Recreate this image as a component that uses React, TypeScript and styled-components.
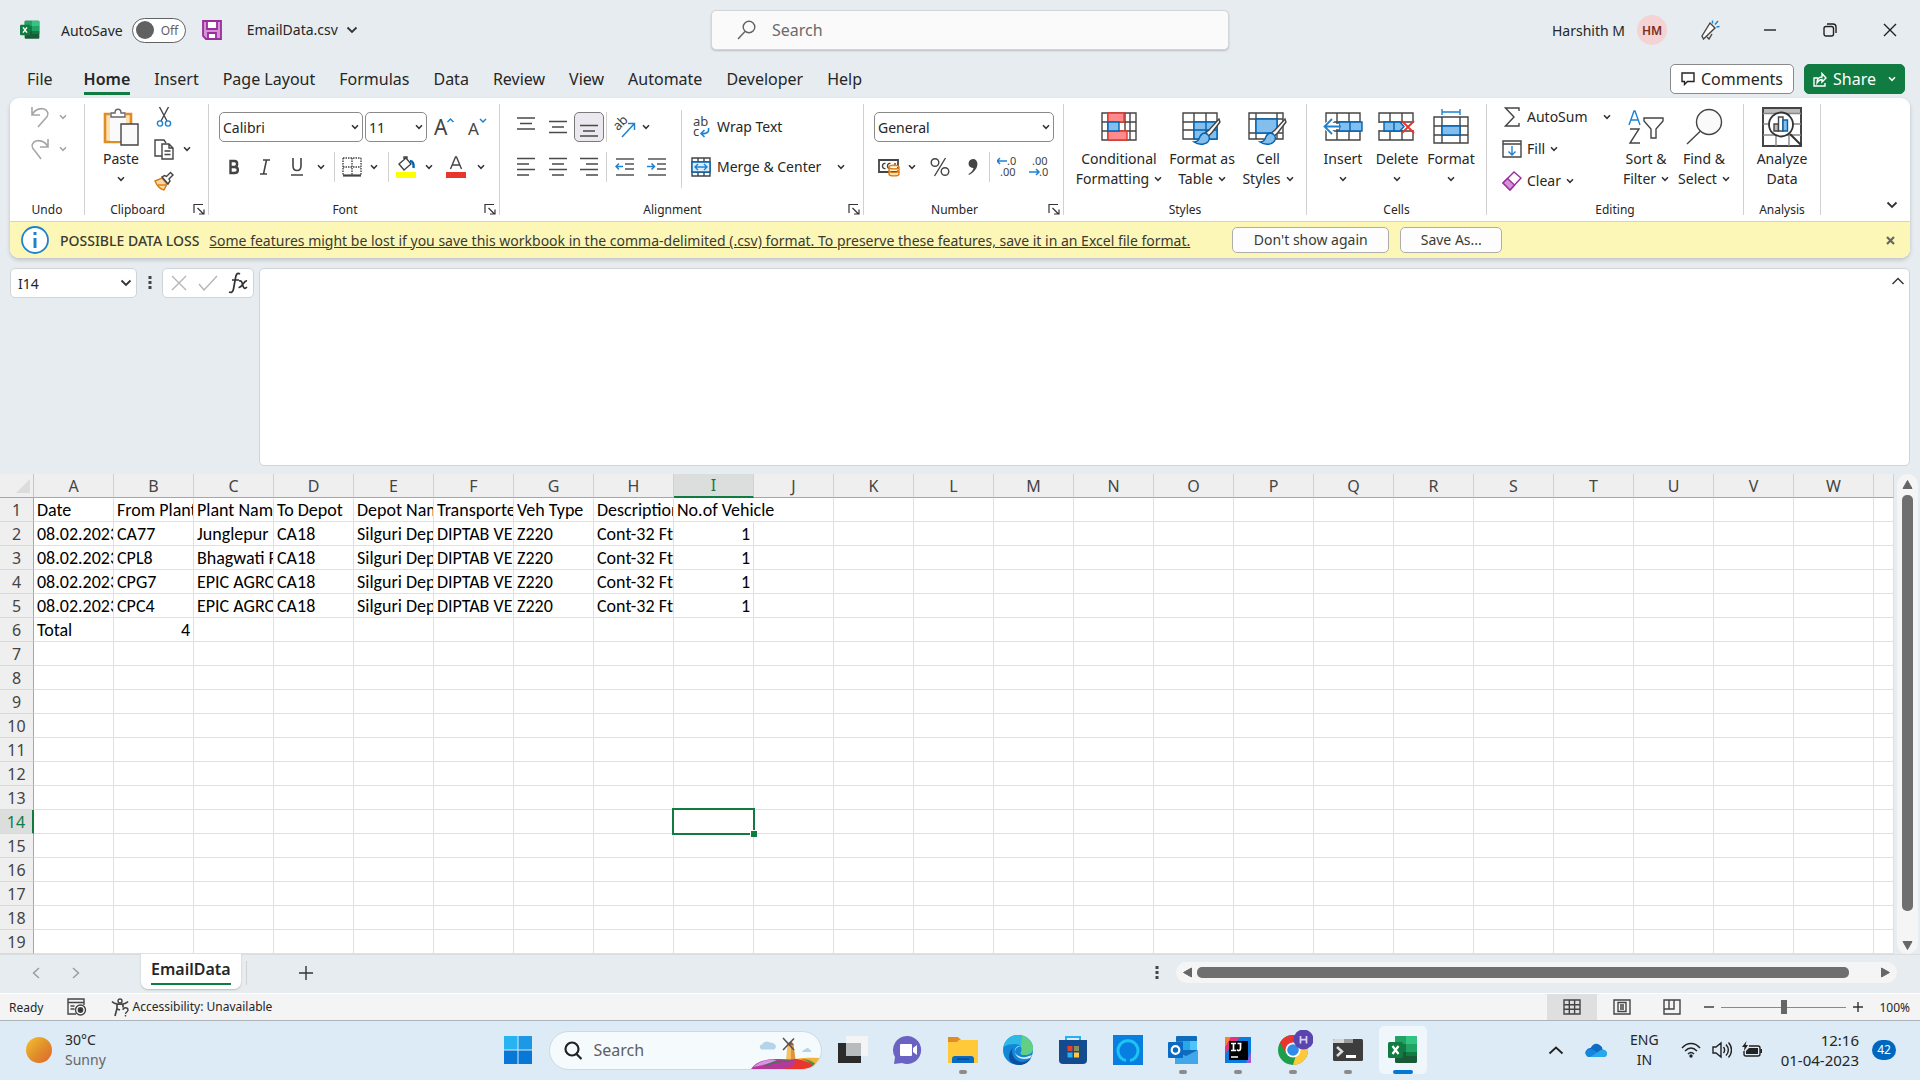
import React from "react";
import styled, { createGlobalStyle, css } from "styled-components";

const ui = `"Noto Sans", "Open Sans", sans-serif`;
const cellFont = `Carlito, Lato, sans-serif`;
const green = "#107c41";
const ink = "#262626";
const line = "#d1d1d1";
const blue = "#1e82d2";

const GlobalStyle = createGlobalStyle`
  *, *::before, *::after { box-sizing: border-box; }
  body { margin: 0; background: #e7ecf0; font-family: ${ui}; font-size: 14px; color: ${ink}; }
  button, input, select, textarea { font: inherit; color: inherit; }
  svg { display: block; flex: none; }
`;

const Page = styled.div`
  display: flex;
  flex-direction: column;
  height: 100vh;
  overflow: hidden;
  white-space: nowrap;
`;

const plainButton = css`
  display: flex;
  align-items: center;
  justify-content: center;
  border: 0;
  padding: 0;
  background: none;
  line-height: 20px;
`;

/* ---------- title bar ---------- */

const TitleBar = styled.header`
  display: flex;
  align-items: center;
  height: 60px;
  padding-left: 20px;
`;
const TitleSide = styled.div<{ $end?: boolean }>`
  flex: 1;
  display: flex;
  align-items: center;
  justify-content: ${(p) => (p.$end ? "flex-end" : "flex-start")};
`;
const AutoSave = styled.label`
  display: flex;
  align-items: center;
  gap: 9px;
  margin: 0 16px 0 21px;
`;
const Toggle = styled.span`
  display: flex;
  align-items: center;
  gap: 7px;
  width: 54px;
  height: 25px;
  padding-left: 3px;
  border: 1px solid #616161;
  border-radius: 13px;
  background: #fff;
  color: #616161;
  font-size: 12px;
  input {
    appearance: none;
    width: 18px;
    height: 18px;
    margin: 0;
    border-radius: 50%;
    background: #616161;
  }
`;
const IconButton = styled.button<{ $w?: number; $pressed?: boolean }>`
  ${plainButton}
  width: ${(p) => p.$w ?? 24}px;
  height: 30px;
  flex: none;
  font-size: 18px;
  ${(p) =>
    p.$pressed &&
    css`
      border: 1px solid #7a7a7a;
      border-radius: 5px;
      background: #ebe9ef;
    `}
`;
const FileName = styled.button`
  ${plainButton}
  gap: 8px;
  margin-left: 25px;
`;
const SearchBox = styled.label`
  display: flex;
  align-items: center;
  gap: 16px;
  width: 518px;
  height: 40px;
  padding-left: 25px;
  margin-bottom: 1px;
  border: 1px solid #d3d6d9;
  border-radius: 5px;
  background: #fafafa;
  box-shadow: 0 1px 2px rgba(0, 0, 0, 0.2);
  color: #616161;
  input {
    flex: 1;
    min-width: 0;
    border: 0;
    padding: 0;
    outline: 0;
    background: none;
    font-size: 16px;
  }
  input::placeholder { color: #6b6b6b; opacity: 1; }
`;
const Avatar = styled.span`
  display: flex;
  align-items: center;
  justify-content: center;
  width: 30px;
  height: 30px;
  margin: 0 13px 0 12px;
  border-radius: 50%;
  background: #f4d3d5;
  color: #7a2e1d;
  font-size: 12px;
  font-weight: 600;
`;

/* ---------- tabs ---------- */

const TabBar = styled.nav`
  display: flex;
  align-items: center;
  gap: 24px;
  height: 38px;
  padding: 0 15px 0 27px;
`;
const Tab = styled.button<{ $active?: boolean }>`
  ${plainButton}
  height: 32px;
  padding-top: 3px;
  border-bottom: 3px solid ${(p) => (p.$active ? green : "transparent")};
  font-size: 16px;
  font-weight: ${(p) => (p.$active ? 600 : 400)};
  &:first-child { margin-right: 7px; }
`;
const TabSpacer = styled.div`
  flex: 1;
`;
const TopActions = styled.div`
  display: flex;
  gap: 10px;
`;
const ActionButton = styled.button<{ $primary?: boolean }>`
  ${plainButton}
  gap: 6px;
  height: 30px;
  padding: 0 ${(p) => (p.$primary ? 8 : 10)}px;
  border: 1px solid ${(p) => (p.$primary ? green : "#8a8a8a")};
  border-radius: 5px;
  background: ${(p) => (p.$primary ? green : "#fff")};
  color: ${(p) => (p.$primary ? "#fff" : ink)};
  font-size: 16px;
  svg:last-child:not(:first-child) { margin-left: 6px; }
`;

/* ---------- ribbon ---------- */

const RibbonCard = styled.section`
  margin: 0 10px 10px;
  border-radius: 9px;
  background: #fff;
  box-shadow: 0 2px 4px rgba(0, 0, 0, 0.18);
`;
const Ribbon = styled.div`
  display: flex;
  height: 123px;
  padding: 6px 0;
`;
const Group = styled.div<{ $w: number }>`
  display: flex;
  flex-direction: column;
  flex: none;
  width: ${(p) => p.$w}px;
  border-right: 1px solid ${line};
`;
const GroupBody = styled.div<{ $pad?: number; $center?: boolean }>`
  display: flex;
  flex: 1;
  justify-content: ${(p) => (p.$center ? "center" : "flex-start")};
  padding-left: ${(p) => p.$pad ?? 0}px;
`;
const GroupFoot = styled.div`
  display: flex;
  align-items: center;
  height: 12px;
  font-size: 12px;
  line-height: 14px;
  span { flex: 1; padding-top: 2px; text-align: center; }
  button { height: 12px; }
`;
const Rows = styled.div`
  display: flex;
  flex-direction: column;
  padding-top: 3px;
`;
const Row = styled.div<{ $tall?: boolean }>`
  display: flex;
  align-items: center;
  height: ${(p) => (p.$tall ? 84 : 40)}px;
`;
const SmallRows = styled.div<{ $w?: number; $gap?: number }>`
  display: flex;
  flex-direction: column;
  gap: 6px;
  width: ${(p) => (p.$w ? p.$w + "px" : "auto")};
  margin-left: ${(p) => p.$gap ?? 0}px;
`;
const SmallRow = styled.div`
  display: flex;
  align-items: center;
  height: 26px;
`;
const TextButton = styled.button`
  ${plainButton}
  gap: 5px;
`;
const IconSlot = styled.span<{ $w: number }>`
  display: flex;
  justify-content: center;
  width: ${(p) => p.$w}px;
`;
const Divider = styled.span<{ $w: number; $h?: number }>`
  display: flex;
  justify-content: center;
  flex: none;
  width: ${(p) => p.$w}px;
  &::before {
    content: "";
    width: 1px;
    height: ${(p) => p.$h ?? 30}px;
    background: ${line};
  }
`;
const BigButton = styled.button<{ $w: number }>`
  ${plainButton}
  flex-direction: column;
  justify-content: flex-start;
  flex: none;
  width: ${(p) => p.$w}px;
  padding-top: 4px;
`;
const BigIcon = styled.span`
  display: flex;
  align-items: center;
  height: 38px;
  margin-bottom: 3px;
`;
const BigLine = styled.span`
  display: flex;
  align-items: center;
  gap: 5px;
  height: 20px;
`;
const SelectWrap = styled.span<{ $w: number }>`
  position: relative;
  width: ${(p) => p.$w}px;
  select {
    appearance: none;
    width: 100%;
    height: 30px;
    padding: 0 3px;
    border: 1px solid #8a8a8a;
    border-radius: 5px;
    background: #fff;
  }
  svg {
    position: absolute;
    right: 4px;
    top: 12px;
    pointer-events: none;
  }
`;
const CollapseCell = styled.div`
  flex: 1;
  display: flex;
  align-items: flex-end;
  justify-content: flex-end;
  padding-right: 6px;
  button { height: 20px; }
`;

/* ---------- message bar ---------- */

const MessageBar = styled.div`
  display: flex;
  align-items: center;
  height: 37px;
  padding: 0 8px 0 11px;
  border-top: 1px solid #d8d6ba;
  border-radius: 0 0 9px 9px;
  background: #fcf7b6;
  color: #3b3a32;
  a { color: inherit; margin-left: 10px; }
  strong { font-weight: 500; margin-left: 11px; }
`;
const MessageButton = styled.button<{ $w: number; $gap: number }>`
  ${plainButton}
  width: ${(p) => p.$w}px;
  height: 26px;
  margin-left: ${(p) => p.$gap}px;
  border: 1px solid #adadad;
  border-radius: 5px;
  background: #fdfdfd;
`;
const Push = styled.span`
  margin-left: auto;
`;

/* ---------- formula bar ---------- */

const FormulaBar = styled.div`
  display: flex;
  align-items: flex-start;
  padding: 0 10px 8px;
`;
const FieldBox = styled.div<{ $w: number }>`
  display: flex;
  align-items: center;
  width: ${(p) => p.$w}px;
  height: 30px;
  padding: 0 4px 0 7px;
  border: 1px solid #d0d4d7;
  border-radius: 5px;
  background: #fff;
  input {
    flex: 1;
    min-width: 0;
    padding: 0;
    border: 0;
    outline: 0;
  }
`;
const FormulaInput = styled.div`
  display: flex;
  flex: 1;
  align-items: flex-start;
  height: 198px;
  margin-left: 5px;
  padding-right: 1px;
  border: 1px solid #d0d4d7;
  border-radius: 5px;
  background: #fff;
  textarea {
    flex: 1;
    height: 100%;
    padding: 4px;
    border: 0;
    outline: 0;
    resize: none;
    background: none;
  }
  button { height: 24px; }
`;

/* ---------- worksheet ---------- */

const SheetArea = styled.main`
  display: flex;
  flex: 1;
  min-height: 0;
`;
const SheetClip = styled.div`
  flex: 1;
  min-width: 0;
  overflow: hidden;
  background: #fff;
`;
const Sheet = styled.table`
  width: 100%;
  table-layout: fixed;
  border-collapse: separate;
  border-spacing: 0;
`;
const ColHead = styled.th<{ $on?: boolean }>`
  height: 24px;
  padding: 0;
  border-right: 1px solid ${line};
  border-bottom: ${(p) => (p.$on ? `2px solid ${green}` : "1px solid #a6a6a6")};
  background: ${(p) => (p.$on ? "#dcdddd" : "#efefef")};
  color: ${(p) => (p.$on ? green : "#444")};
  font-size: 16px;
  font-weight: 400;
  line-height: 20px;
`;
const Corner = styled.th`
  padding: 0;
  border-right: 1px solid #c6c6c6;
  border-bottom: 1px solid #a6a6a6;
  background: #efefef;
  svg { margin-left: auto; margin-right: 3px; }
`;
const RowHead = styled.th<{ $on?: boolean }>`
  height: 24px;
  padding: 0;
  border-right: ${(p) => (p.$on ? `2px solid ${green}` : "1px solid #a6a6a6")};
  border-bottom: 1px solid #dadada;
  background: ${(p) => (p.$on ? "#dcdddd" : "#efefef")};
  color: ${(p) => (p.$on ? green : "#444")};
  font-size: 16px;
  font-weight: 400;
  line-height: 20px;
`;
const Cell = styled.td<{ $right?: boolean; $spill?: boolean }>`
  position: relative;
  height: 24px;
  padding: 0 3px;
  overflow: ${(p) => (p.$spill ? "visible" : "hidden")};
  border-right: 1px solid ${(p) => (p.$spill ? "transparent" : "#e0e0e0")};
  border-bottom: 1px solid #e0e0e0;
  color: #000;
  font-family: ${cellFont};
  font-size: 18px;
  line-height: 20px;
  text-align: ${(p) => (p.$right ? "right" : "left")};
  z-index: ${(p) => (p.$spill ? 1 : "auto")};
`;
const SelectionFrame = styled.span`
  position: absolute;
  inset: -2px;
  border: 2px solid ${green};
  &::after {
    content: "";
    position: absolute;
    right: -4px;
    bottom: -4px;
    width: 7px;
    height: 7px;
    border: 1px solid #fff;
    border-right: 0;
    border-bottom: 0;
    background: ${green};
  }
`;
const SelectedCell = styled(Cell)`
  overflow: visible;
  z-index: 2;
`;
const VTrack = styled.div`
  display: flex;
  flex-direction: column;
  align-items: center;
  gap: 5px;
  width: 21px;
  margin: 0 2px 0 3px;
  padding: 5px 0 3px;
  border-radius: 11px;
  background: #f5f5f5;
`;
const VThumb = styled.div`
  flex: 0 1 416px;
  width: 11px;
  border-radius: 5px;
  background: #6f6f6f;
`;
const VGap = styled.div`
  flex: 1;
`;

/* ---------- sheet tabs ---------- */

const SheetBar = styled.div`
  display: flex;
  height: 39px;
  padding-right: 23px;
  border-top: 1px solid #d9dde0;
`;
const SheetNav = styled.div`
  display: flex;
  align-items: center;
  width: 141px;
  padding: 0 0 2px 16px;
`;
const SheetTab = styled.button`
  ${plainButton}
  height: 35px;
  margin-top: -1px;
  padding: 0 10px 2px;
  border-radius: 0 0 7px 7px;
  background: #fff;
  box-shadow: 0 1px 2px rgba(0, 0, 0, 0.2);
  font-size: 16px;
  font-weight: 600;
  span {
    padding-bottom: 2px;
    border-bottom: 2px solid ${green};
    line-height: 24px;
  }
`;
const SheetAdd = styled.div`
  display: flex;
  align-items: center;
  flex: 1;
  gap: 44px;
  padding: 0 0 2px 2px;
`;
const HTrack = styled.div`
  display: flex;
  align-items: center;
  gap: 4px;
  width: 38%;
  height: 21px;
  margin: 7px 0 0 12px;
  padding: 0 6px;
  border-radius: 11px;
  background: #f5f5f5;
`;
const HThumb = styled.div`
  width: 92%;
  height: 11px;
  border-radius: 5px;
  background: #6f6f6f;
`;

/* ---------- status bar ---------- */

const StatusBar = styled.footer`
  display: flex;
  align-items: center;
  height: 28px;
  padding: 0 10px 0 9px;
  border-top: 1px solid #fff;
  border-bottom: 1px solid #aeb4b9;
  background: #f4f4f4;
  font-size: 12px;
`;
const StatusItem = styled.button`
  ${plainButton}
  gap: 2px;
  margin-left: 24px;
`;
const ViewButton = styled.button<{ $on?: boolean }>`
  ${plainButton}
  width: 50px;
  height: 26px;
  background: ${(p) => (p.$on ? "#dfdfdf" : "none")};
`;
const Zoom = styled.input`
  appearance: none;
  width: 125px;
  height: 14px;
  margin: 0;
  background: linear-gradient(#8a8a8a, #8a8a8a) center / 100% 1px no-repeat;
  &::-webkit-slider-thumb {
    appearance: none;
    width: 6px;
    height: 14px;
    background: #666;
  }
`;
const Percent = styled.output`
  width: 40px;
  text-align: right;
`;

/* ---------- taskbar ---------- */

const Taskbar = styled.div`
  display: grid;
  grid-template-columns: 1fr auto 1fr;
  align-items: center;
  height: 59px;
  padding: 0 24px 1px;
  background: #dcebf6;
`;
const Weather = styled.div`
  display: flex;
  align-items: center;
  gap: 12px;
  padding-left: 1px;
  line-height: 20px;
  small { display: block; font-size: 14px; color: #666; }
`;
const Apps = styled.div`
  display: flex;
  align-items: center;
  gap: 7px;
`;
const AppButton = styled.button<{ $state?: "open" | "active" }>`
  ${plainButton}
  flex-direction: column;
  position: relative;
  width: 48px;
  height: 48px;
  border-radius: 5px;
  background: ${(p) => (p.$state === "active" ? "#eff6fc" : "none")};
  &::after {
    content: "";
    position: absolute;
    bottom: 0;
    width: ${(p) => (p.$state === "active" ? 20 : p.$state ? 8 : 0)}px;
    height: 4px;
    border-radius: 2px;
    background: ${(p) => (p.$state === "active" ? "#0078d4" : "#8b8b8b")};
  }
`;
const TaskSearch = styled.label`
  display: flex;
  align-items: center;
  gap: 12px;
  width: 273px;
  height: 39px;
  padding-left: 14px;
  overflow: hidden;
  border: 1px solid #c9dae6;
  border-radius: 20px;
  background: #f5fafd;
  input {
    flex: 1;
    min-width: 0;
    padding: 0;
    border: 0;
    outline: 0;
    background: none;
    font-size: 16px;
  }
  input::placeholder { color: #606060; opacity: 1; }
`;
const Tray = styled.div`
  display: flex;
  align-items: center;
  justify-content: flex-end;
  gap: 9px;
  line-height: 20px;
`;
const TrayText = styled.div<{ $right?: boolean }>`
  margin: ${(p) => (p.$right ? "0 4px 0 10px" : "0 12px 0 6px")};
  text-align: ${(p) => (p.$right ? "right" : "center")};
  font-size: ${(p) => (p.$right ? 15 : 14)}px;
`;
const Badge = styled.span`
  width: 24px;
  height: 20px;
  border-radius: 10px;
  background: #0067c0;
  color: #fff;
  font-size: 12px;
  text-align: center;
`;

/* ---------- drawings ---------- */

type DrawProps = { w: number; h: number; s?: string; sw?: number; children: React.ReactNode };
const Draw = ({ w, h, s = "#444", sw = 1.4, children }: DrawProps) => (
  <svg width={w} height={h} viewBox={`0 0 ${w} ${h}`} fill="none" stroke={s} strokeWidth={sw} aria-hidden="true">
    {children}
  </svg>
);
const Chev = ({ c = "#333", big, up }: { c?: string; big?: boolean; up?: boolean }) => (
  <Draw w={big ? 12 : 8} h={big ? 8 : 6} s={c} sw={up ? 1.4 : big ? 1.8 : 1.5}>
    <path d={up ? "M.500 7 6 1.500 11.500 7" : big ? "M1.5 1.5 6 6l4.500-4.500" : "M1 1.200 4 4.300 7 1.200"} />
  </Draw>
);
const ChevButton = ({ w = 18, c }: { w?: number; c?: string }) => (
  <IconButton $w={w} aria-label="More options"><Chev c={c} /></IconButton>
);
const Launcher = () => (
  <IconButton $w={18} aria-label="Group settings">
    <Draw w={12} h={12} s="#333" sw={1.2}><path d="M1 10V1.500h9M4.500 5l6 6M11 6.500V11H6" /></Draw>
  </IconButton>
);
const ExcelIcon = ({ size }: { size: number }) => (
  <svg width={size} height={size} viewBox="0 0 30 30" aria-hidden="true">
    <rect x="7" y="1" width="22" height="27" rx="1.500" fill="#185c37" />
    <path d="M7 2.500A1.500 1.500 0 0 1 8.500 1H18v8H7z" fill="#21a366" />
    <path d="M18 1h9.500A1.500 1.500 0 0 1 29 2.500V9H18z" fill="#33c481" />
    <rect x="7" y="9" width="11" height="8" fill="#107c41" />
    <rect x="18" y="9" width="11" height="8" fill="#21a366" />
    <rect x="18" y="17" width="11" height="4" fill="#107c41" />
    <rect x="0" y="7" width="15" height="16" rx="1.500" fill="#107c41" />
    <path d="m4.500 11 6 8M10.500 11l-6 8" stroke="#fff" strokeWidth="2.200" />
  </svg>
);
const Lines = ({ y, x }: { y: number[]; x: number[][] }) => (
  <Draw w={20} h={22} s="#4a4a4a" sw={1.5}>
    <path d={y.map((v, i) => `M${x[i][0]} ${v}H${x[i][1]}`).join("")} />
  </Draw>
);
const vAlign = [[1, 19], [4, 16], [1, 19]];
const Indent = ({ flip }: { flip?: boolean }) => (
  <Draw w={20} h={20} s="#555" sw={1.5}>
    <path d="M1 2h18M10 7h9M10 12h9M1 18h18" />
    <path stroke={blue} d={flip ? "M0 9.500h7M4.500 6.500l3 3-3 3" : "M1 9.500h7M4 6.500l-3 3 3 3"} />
  </Draw>
);
const Brush = () => (
  <>
    <path d="M37 11 27 22l-3.500 3 3 3 3.500-3.500L38 14z" fill="#fafafa" />
    <path d="M23 25c-4 0-5 3-6 6-1 2-3 3-5 3 5 3.500 13 3 15-2 1-3-.500-6-4-7z" fill="#83beec" stroke="#0063b1" />
  </>
);
const CondIcon = () => (
  <Draw w={36} h={30}>
    <path d="M1 1h34v27H1zM7 1v27M29 1v27M1 10h34M1 19h34M24 1v27" fill="#fff" />
    <path d="M7 1h16v9H7zM7 19h19v9H7z" fill="#ff8a8c" stroke="#e8352d" />
    <path d="M7 10h11v9H7z" fill="#83beec" stroke="#0063b1" />
  </Draw>
);
const TableIcon = ({ cell }: { cell?: boolean }) => (
  <Draw w={40} h={38}>
    <path d={cell ? "M1 5h34v26H1zM1 11h34M8 5v26M1 25h34M29 5v26" : "M1 5h34v26H1zM1 14h34M1 22h34M12 5v26M24 5v26"} fill="#fff" />
    <path d={cell ? "M8 11h21v14H8z" : "M12 14h23v17H12zM12 22h23M24 14v17"} fill="#83beec" stroke="#0063b1" />
    <Brush />
  </Draw>
);
const InsertIcon = () => (
  <Draw w={40} h={36}>
    <path d="M3 4h34v27H3zM14 4v27M26 4v27M3 13h34M3 22h34" fill="#fff" />
    <path d="M16 13h23v9H16zM27 13v9" fill="#83beec" stroke="#0063b1" />
    <path d="M16 17.500H2M10 10l-8 7.500 8 7.500" stroke="#fff" strokeWidth={5} />
    <path d="M18 17.500H1.500M9 10l-7.500 7.500L9 25" stroke={blue} strokeWidth={1.800} />
  </Draw>
);
const DeleteIcon = () => (
  <Draw w={38} h={36}>
    <path d="M1 4h34v27H1zM12 4v27M24 4v27M1 13h34M1 22h34" fill="#fff" />
    <path d="M0 14h36v7H0z" fill="#fff" stroke="none" />
    <path d="M6 13h16l4 4.500-4 4.500H6zM16 13v9" fill="#83beec" stroke="#0063b1" />
    <path d="m24 12 12 12M36 12 24 24" stroke="#e8352d" strokeWidth={1.900} />
  </Draw>
);
const FormatIcon = () => (
  <Draw w={36} h={38}>
    <path d="M1 9h34v26H1zM9 9v26M27 9v26M1 18h34M1 27h34" fill="#fff" />
    <path d="M9 18h18v9H9z" fill="#83beec" stroke="#0063b1" />
    <path d="M9 4h18M9 1v6M27 1v6" stroke={blue} />
  </Draw>
);
const MergeIcon = () => (
  <Draw w={20} h={20}>
    <path d="M1 1h18v18H1zM1 5h18M1 15h18M7 1v4M13 1v4M7 15v4M13 15v4" fill="#fff" />
    <path d="M1 5h18v10H1z" fill="#dcecf9" stroke="#0063b1" />
    <path d="M4 10h12M7 7l-3 3 3 3M13 7l3 3-3 3" stroke={blue} />
  </Draw>
);
const DecimalIcon = ({ less }: { less?: boolean }) => (
  <svg width="20" height="22" viewBox="0 0 20 22" aria-hidden="true" fontFamily="Noto Sans, sans-serif" fontSize="11" fill="#444">
    <text x={less ? 3 : 10} y="9">{less ? ".00" : ".0"}</text>
    <text x={less ? 10 : 3} y="20">{less ? ".0" : ".00"}</text>
    <path d={less ? "M0 16h10M7 13l3 3-3 3" : "M10 5H0M3 2 0 5l3 3"} fill="none" stroke={blue} strokeWidth="1.500" />
  </svg>
);
const FontSizeIcon = ({ shrink }: { shrink?: boolean }) => (
  <svg width="20" height="24" viewBox="0 0 20 24" aria-hidden="true" fontFamily="Noto Sans, sans-serif" fill="#444">
    <text x="0" y="20" fontSize={shrink ? 17 : 21}>A</text>
    <path d={shrink ? "m12 4 3 3 3-3" : "m13.500 7 3-3 3 3"} fill="none" stroke={blue} strokeWidth="1.500" />
  </svg>
);
const MagnifierIcon = ({ s = "#616161" }: { s?: string }) => (
  <Draw w={19} h={20} s={s} sw={1.4}><circle cx="12" cy="7" r="5.800" /><path d="M8 11.500 1 19" /></Draw>
);
const Tri = ({ d }: { d: string }) => (
  <svg width="11" height="11" viewBox="0 0 11 11" aria-hidden="true"><path d={d} fill="#666" stroke="#666" strokeLinejoin="round" /></svg>
);
const Dots = () => (
  <svg width="4" height="14" viewBox="0 0 4 14" aria-hidden="true"><path d="M.500 0h3v3h-3zM.500 5h3v3h-3zM.500 10h3v3h-3z" fill="#444" /></svg>
);

/* ---------- data ---------- */

const tabs = ["File", "Home", "Insert", "Page Layout", "Formulas", "Data", "Review", "View", "Automate", "Developer", "Help"];
const columns = "ABCDEFGHIJKLMNOPQRSTUVW".split("");
const shipment = (plant: string, name: string) => ["08.02.2023", plant, name, "CA18", "Silguri Dep", "DIPTAB VE", "Z220", "Cont-32 Ft", 1];
const data: (string | number)[][] = [
  ["Date", "From Plant", "Plant Name", "To Depot", "Depot Name", "Transporter", "Veh Type", "Description", "No.of Vehicle"],
  shipment("CA77", "Junglepur P"),
  shipment("CPL8", "Bhagwati P"),
  shipment("CPG7", "EPIC AGRO"),
  shipment("CPC4", "EPIC AGRO"),
  ["Total", 4],
];
const rowCount = 19;

const Big = ({ w, icon, lines, menu }: { w: number; icon: React.ReactNode; lines: string[]; menu?: boolean }) => (
  <BigButton $w={w}>
    <BigIcon>{icon}</BigIcon>
    {lines.map((t, i) => (
      <BigLine key={t}>{t}{menu && i === lines.length - 1 && <Chev />}</BigLine>
    ))}
  </BigButton>
);
const BigDrop = ({ w, icon, text }: { w: number; icon: React.ReactNode; text: string }) => (
  <BigButton $w={w}>
    <BigIcon>{icon}</BigIcon>
    <BigLine>{text}</BigLine>
    <BigLine><Chev /></BigLine>
  </BigButton>
);

const RibbonGroups = () => (
  <Ribbon>
    <Group $w={75}>
      <GroupBody $pad={18}>
        <SmallRows>
          <SmallRow>
            <IconButton aria-label="Undo"><Draw w={20} h={22} s="#a6a6a6" sw={1.600}><path d="M2 1v8h8M2 9C5 3 12 1 16 4c4 4 1 7-1 9l-7 8" /></Draw></IconButton>
            <ChevButton w={22} c="#a6a6a6" />
          </SmallRow>
          <SmallRow>
            <IconButton aria-label="Redo"><Draw w={20} h={22} s="#a6a6a6" sw={1.600}><path d="M18 1v8h-8M18 9C15 3 8 1 4 4c-4 4-1 7 1 9l6 8" /></Draw></IconButton>
            <ChevButton w={22} c="#a6a6a6" />
          </SmallRow>
        </SmallRows>
      </GroupBody>
      <GroupFoot><span>Undo</span></GroupFoot>
    </Group>

    <Group $w={124}>
      <GroupBody $pad={13}>
        <BigDrop
          w={46}
          text="Paste"
          icon={
            <Draw w={36} h={38}>
              <path d="M2 6h26v28H2z" fill="#fde2b0" stroke="#e08d28" strokeWidth={2.600} />
              <path d="M7 4h16v29H7z" fill="#fafafa" stroke="none" />
              <path d="M8 9V5h4c0-5 6-5 6 0h4v4z" fill="#fff" stroke="#666" />
              <path d="M18 16h17v21H18z" fill="#fafafa" />
            </Draw>
          }
        />
        <SmallRows $gap={8}>
          <SmallRow>
            <IconButton aria-label="Cut">
              <Draw w={16} h={22}><path d="M3.500 1 11 15M12.500 1 5 15" /><circle cx="4" cy="17.500" r="2.600" stroke={blue} /><circle cx="12" cy="17.500" r="2.600" stroke={blue} /></Draw>
            </IconButton>
          </SmallRow>
          <SmallRow>
            <IconButton aria-label="Copy">
              <Draw w={20} h={21}><path d="M8 17H1V1h9l2 3" fill="#fff" /><path d="M8 5h7l4 4v11H8zM15 5v4h4M10.500 12h6M10.500 15.500h6" fill="#fff" /></Draw>
            </IconButton>
            <ChevButton w={22} />
          </SmallRow>
          <SmallRow>
            <IconButton aria-label="Format painter">
              <Draw w={20} h={20}><path d="M1 10 8 7l5 6-3 6c-4-1-7-4-9-9z" fill="#fbd9a5" stroke="#d97a12" /><path d="M4 14h8" stroke="#d97a12" /><path d="m8 6 6 7 2-3-1-2 4-4-2.500-2.500-4 4-2-1z" fill="#fafafa" /></Draw>
            </IconButton>
          </SmallRow>
        </SmallRows>
      </GroupBody>
      <GroupFoot><span>Clipboard</span><Launcher /></GroupFoot>
    </Group>

    <Group $w={291}>
      <GroupBody $pad={10}>
        <Rows>
          <Row>
            <SelectWrap $w={144}><select aria-label="Font"><option>Calibri</option></select><Chev /></SelectWrap>
            <Divider $w={2} $h={0} />
            <SelectWrap $w={62}><select aria-label="Font size"><option>11</option></select><Chev /></SelectWrap>
            <IconButton $w={34} aria-label="Increase font size"><FontSizeIcon /></IconButton>
            <IconButton $w={34} aria-label="Decrease font size"><FontSizeIcon shrink /></IconButton>
          </Row>
          <Row>
            <IconButton $w={30} aria-label="Bold"><Draw w={12} h={16} sw={2.400}><path d="M2.500 2v12h4c4.500 0 4.500-6 0-6 3.500 0 3.500-6 0-6zM2.500 8h4" /></Draw></IconButton>
            <IconButton $w={32} aria-label="Italic"><Draw w={12} h={16} sw={1.600}><path d="M4 1h7M1 15h7M7.500 1l-3 14" /></Draw></IconButton>
            <IconButton $w={32} aria-label="Underline"><Draw w={12} h={18} sw={1.600}><path d="M2 0v8c0 6 8 6 8 0V0M0 17h12" /></Draw></IconButton>
            <ChevButton w={16} />
            <Divider $w={10} />
            <IconButton $w={26} aria-label="Borders">
              <Draw w={20} h={20}><path d="M1 1h18M1 1v17M19 1v17M10 1v17M1 10h18" strokeDasharray="1.500 1" /><path d="M1 18.500h18" strokeWidth={2.200} /></Draw>
            </IconButton>
            <ChevButton />
            <Divider $w={10} />
            <IconButton $w={26} aria-label="Fill color">
              <Draw w={20} h={22}><path d="m3 8 7-6 5 6-7 6zM8 5V1h3v3" fill="#fff" /><path d="M14 5c3 0 4 3 3.500 7" stroke="#0063b1" strokeWidth={2.400} /><path d="M0 16h20v6H0z" fill="#ff0" stroke="none" /></Draw>
            </IconButton>
            <ChevButton w={20} />
            <IconButton $w={34} aria-label="Font color">
              <Draw w={20} h={22}><path d="m4.500 13 5-12h1l5 12M6 9h8" /><path d="M0 16h20v6H0z" fill="#e8352d" stroke="none" /></Draw>
            </IconButton>
            <ChevButton w={16} />
          </Row>
        </Rows>
      </GroupBody>
      <GroupFoot><span>Font</span><Launcher /></GroupFoot>
    </Group>

    <Group $w={364}>
      <GroupBody $pad={10}>
        <Rows>
          <Row>
            <IconButton $w={32} aria-label="Top align"><Lines y={[2, 7.5, 13]} x={vAlign} /></IconButton>
            <IconButton $w={32} aria-label="Middle align"><Lines y={[5.5, 11, 16.5]} x={vAlign} /></IconButton>
            <IconButton $w={30} $pressed aria-label="Bottom align"><Lines y={[9.5, 15, 20]} x={vAlign} /></IconButton>
            <Divider $w={5} />
            <IconButton $w={32} aria-label="Orientation">
              <svg width="22" height="22" viewBox="0 0 22 22" aria-hidden="true">
                <text x="0" y="12" fontFamily="Noto Sans, sans-serif" fontSize="13" fill="#444" transform="rotate(-45 6 9)">ab</text>
                <path d="M8 21 20 8M14 7.500h6.500V14" fill="none" stroke={blue} strokeWidth="1.500" />
              </svg>
            </IconButton>
            <ChevButton w={10} />
          </Row>
          <Row>
            <IconButton $w={32} aria-label="Align left"><Lines y={[2.5, 8, 13.5, 19]} x={[[1, 19], [1, 13], [1, 19], [1, 13]]} /></IconButton>
            <IconButton $w={32} aria-label="Center"><Lines y={[2.5, 8, 13.5, 19]} x={[[1, 19], [4, 16], [1, 19], [4, 16]]} /></IconButton>
            <IconButton $w={30} aria-label="Align right"><Lines y={[2.5, 8, 13.5, 19]} x={[[1, 19], [7, 19], [1, 19], [7, 19]]} /></IconButton>
            <Divider $w={5} />
            <IconButton $w={32} aria-label="Decrease indent"><Indent /></IconButton>
            <IconButton $w={32} aria-label="Increase indent"><Indent flip /></IconButton>
          </Row>
        </Rows>
        <Rows><Row $tall><Divider $w={17} $h={78} /></Row></Rows>
        <Rows>
          <Row>
            <TextButton>
              <IconSlot $w={22}>
                <svg width="20" height="22" viewBox="0 0 20 22" aria-hidden="true" fontFamily="Noto Sans, sans-serif" fontSize="13" fill="#444">
                  <text x="2" y="10">ab</text>
                  <text x="2" y="20">c</text>
                  <path d="M17.500 12c1 5-3 6-7 5.500M13.500 14l-3.500 3.500 3.500 3.500" fill="none" stroke={blue} strokeWidth="1.600" />
                </svg>
              </IconSlot>
              Wrap Text
            </TextButton>
          </Row>
          <Row>
            <TextButton><IconSlot $w={22}><MergeIcon /></IconSlot>Merge &amp; Center</TextButton>
            <ChevButton w={40} />
          </Row>
        </Rows>
      </GroupBody>
      <GroupFoot><span>Alignment</span><Launcher /></GroupFoot>
    </Group>

    <Group $w={200}>
      <GroupBody $pad={10}>
        <Rows>
          <Row>
            <SelectWrap $w={180}><select aria-label="Number format"><option>General</option></select><Chev /></SelectWrap>
          </Row>
          <Row>
            <IconButton $w={30} aria-label="Accounting format">
              <Draw w={22} h={20}>
                <path d="M1 3h19v12H1z" fill="#fff" strokeWidth={1.800} />
                <path d="M7.500 6.500c-4-1-4 6 0 5M12.500 6.500c-4-1-4 6 0 5M17 6v3" />
                <path d="M11 10c0-2.500 10-2.500 10 0v7c0 2.500-10 2.500-10 0zM11 10c0 2.500 10 2.500 10 0M11 13.500c0 2.500 10 2.500 10 0" fill="#fde2b0" stroke="#d97a12" />
              </Draw>
            </IconButton>
            <ChevButton w={16} />
            <IconButton $w={40} aria-label="Percent style"><Draw w={20} h={20}><circle cx="5" cy="5.500" r="3.800" /><circle cx="15" cy="14.500" r="3.800" /><path d="M15.500 1 4.500 19" /></Draw></IconButton>
            <IconButton $w={26} aria-label="Comma style"><Draw w={12} h={18} s="none"><path d="M6 1c6 0 7 10-4 16l-.500-1C5 14 6 12 6.500 10 0 10.500 0 1 6 1z" fill="#444" /></Draw></IconButton>
            <Divider $w={6} />
            <IconButton $w={30} aria-label="Increase decimal"><DecimalIcon /></IconButton>
            <IconButton $w={34} aria-label="Decrease decimal"><DecimalIcon less /></IconButton>
          </Row>
        </Rows>
      </GroupBody>
      <GroupFoot><span>Number</span><Launcher /></GroupFoot>
    </Group>

    <Group $w={243}>
      <GroupBody $pad={12}>
        <Big w={86} icon={<CondIcon />} lines={["Conditional", "Formatting"]} menu />
        <Big w={80} icon={<TableIcon />} lines={["Format as", "Table"]} menu />
        <Big w={52} icon={<TableIcon cell />} lines={["Cell", "Styles"]} menu />
      </GroupBody>
      <GroupFoot><span>Styles</span></GroupFoot>
    </Group>

    <Group $w={180}>
      <GroupBody $pad={9}>
        <BigDrop w={54} icon={<InsertIcon />} text="Insert" />
        <BigDrop w={54} icon={<DeleteIcon />} text="Delete" />
        <BigDrop w={54} icon={<FormatIcon />} text="Format" />
      </GroupBody>
      <GroupFoot><span>Cells</span></GroupFoot>
    </Group>

    <Group $w={257}>
      <GroupBody $pad={15}>
        <SmallRows $w={112}>
          <SmallRow>
            <TextButton><IconSlot $w={20}><Draw w={16} h={20}><path d="M15 4V1H1.500L10 10l-8.500 9H15v-3" /></Draw></IconSlot>AutoSum</TextButton>
            <Push><ChevButton w={14} /></Push>
          </SmallRow>
          <SmallRow>
            <TextButton><IconSlot $w={20}><Draw w={20} h={18}><path d="M1 1h18v16H1zM1 4h18" fill="#fff" /><path d="M10 6v9M6.500 11.500 10 15l3.500-3.500" stroke={blue} /></Draw></IconSlot>Fill <Chev /></TextButton>
          </SmallRow>
          <SmallRow>
            <TextButton><IconSlot $w={20}><Draw w={20} h={20} s="#9b2d9b"><path d="m1 12 11-11 7 6L8 19z" fill="#fff" /><path d="m1 12 4.500-4.500L12.500 14 8 19z" fill="#d493d6" /></Draw></IconSlot>Clear <Chev /></TextButton>
          </SmallRow>
        </SmallRows>
        <Big
          w={64}
          lines={["Sort &", "Filter"]}
          menu
          icon={
            <Draw w={36} h={36}>
              <path d="m1 16 5-14h1l5 14M3 11h7" stroke={blue} />
              <path d="M2 20h9L2 34h10M16 9h19v3l-7 8v9h-5v-9l-7-8z" />
            </Draw>
          }
        />
        <Big w={52} lines={["Find &", "Select"]} menu icon={<Draw w={38} h={38}><circle cx="24" cy="14" r="12.500" fill="#fafafa" /><path d="M15.500 23 2 36" /></Draw>} />
      </GroupBody>
      <GroupFoot><span>Editing</span></GroupFoot>
    </Group>

    <Group $w={77}>
      <GroupBody $center>
        <Big
          w={70}
          lines={["Analyze", "Data"]}
          icon={
            <Draw w={40} h={40}>
              <path d="M1 1h38v38H1z" fill="#fff" strokeWidth={2} />
              <path d="M2 2h36v4H2z" fill="#bbb" stroke="none" />
              <path d="M1 6.500h38M1 17h38M1 28h38M14 6v33M27 6v33" stroke="#888" />
              <circle cx="19" cy="17.500" r="12" fill="#fff" stroke="#333" strokeWidth={1.800} />
              <path d="m28 27 11 11" stroke="#333" strokeWidth={2} />
              <path d="M12 17h4.500v7H12z" fill="#bbb" /><path d="M16.500 10H21v14h-4.500z" fill="#fff" /><path d="M21 13h4.500v11H21z" fill="#83beec" stroke="#0063b1" />
            </Draw>
          }
        />
      </GroupBody>
      <GroupFoot><span>Analysis</span></GroupFoot>
    </Group>

    <CollapseCell><IconButton aria-label="Collapse ribbon"><Chev big /></IconButton></CollapseCell>
  </Ribbon>
);

const Worksheet = () => (
  <Sheet>
    <colgroup>
      <col style={{ width: 34 }} />
      {columns.map((c) => <col key={c} style={{ width: 80 }} />)}
      <col />
    </colgroup>
    <thead>
      <tr>
        <Corner><Draw w={14} h={14} s="none"><path d="M14 0v14H0z" fill="#dcdcdc" /></Draw></Corner>
        {columns.map((c) => <ColHead key={c} $on={c === "I"} scope="col">{c}</ColHead>)}
        <ColHead as="td" />
      </tr>
    </thead>
    <tbody>
      {Array.from({ length: rowCount }, (_, r) => (
        <tr key={r}>
          <RowHead $on={r === 13} scope="row">{r + 1}</RowHead>
          {columns.map((c, i) => {
            if (r === 13 && c === "I") return <SelectedCell key={c}><SelectionFrame /></SelectedCell>;
            const v = data[r]?.[i];
            return <Cell key={c} $right={typeof v === "number"} $spill={r === 0 && c === "I"}>{v}</Cell>;
          })}
          <Cell />
        </tr>
      ))}
    </tbody>
  </Sheet>
);

const TaskIcon = ({ children }: { children: React.ReactNode }) => (
  <svg width="32" height="32" viewBox="0 0 32 32" aria-hidden="true">{children}</svg>
);

const apps: { name: string; state?: "open" | "active"; icon: React.ReactNode }[] = [
  { name: "Task view", icon: <TaskIcon><rect x="1" y="9" width="23" height="20" fill="#2b2b2b" /><rect x="9" y="2" width="22" height="20" fill="#f4f4f4" /><path d="M9 9h15v13H9z" fill="#b9bcbe" /></TaskIcon> },
  { name: "Chat", icon: <TaskIcon><path d="M16 2a14 14 0 1 1-6 27l-8 1 1-7A14 14 0 0 1 16 2z" fill="#6b63c4" /><rect x="8" y="10" width="12" height="12" rx="1" fill="#fff" /><path d="m21 14 4-3v10l-4-3z" fill="#fff" /></TaskIcon> },
  { name: "File Explorer", state: "open", icon: <TaskIcon><path d="M1 3h10l3 3h17v6H1z" fill="#e08d28" /><path d="M1 8h9l2-2h19v23H1z" fill="#ffc93a" /><path d="M5 29v-4q0-3 3-3h16q3 0 3 3v4z" fill="#0a6bc4" /><path d="M10 25h12" stroke="#064a90" strokeWidth="1.500" /></TaskIcon> },
  { name: "Edge", icon: <TaskIcon><circle cx="16" cy="16" r="15" fill="#1287d8" /><path d="M1.500 13C3 5 9 1 16 1c9 0 15 6 15 13 0 5-4 7-8 7-4 0-5-1-4-3 2-5-2-8-6-8-5 0-9 1-11.500 3z" fill="#2fb9e5" /><path d="M20 1.500C27 4 31 9 31 14c0 5-4 7-8 7-4 0-5-1-4-3 1-2 1-4 0-5z" fill="#63cf83" /><path d="M10 17c0 8 7 13 14 10 3-1 3-2 5-3-4 8-14 9-20 4-4-5-2-11 4-16-2 2-3 3-3 5z" fill="#0c4f9e" /><path d="M19 13c-3-2-7 1-6 5s6 6 11 5l6-2-2 3c-8 3-15-1-15-6 0-4 3-6 6-5z" fill="#dcebf6" /></TaskIcon> },
  { name: "Store", icon: <TaskIcon><path d="M9 7V3h14v4" fill="none" stroke="#26b2ef" strokeWidth="2" /><path d="M2 6h28v20q0 4-4 4H6q-4 0-4-4z" fill="#134b8e" /><path d="M10.500 12h5v5h-5z" fill="#e8402c" /><path d="M17 12h5v5h-5z" fill="#8a8f60" /><path d="M10.500 18.500h5v5h-5z" fill="#26b2ef" /><path d="M17 18.500h5v5h-5z" fill="#ffc93a" /></TaskIcon> },
  { name: "Alexa", icon: <TaskIcon><path d="M1 1h30v30H1z" fill="#077fe0" /><path d="M14 26.500a10 10 0 1 1 4 0" fill="none" stroke="#1fc3f3" strokeWidth="3" /></TaskIcon> },
  { name: "Outlook", state: "open", icon: <TaskIcon><rect x="9" y="2" width="21" height="27" rx="1" fill="#0f6cbd" /><path d="M9 7h7v9H9z" fill="#1a84d8" /><path d="M16 7h7v9h-7z" fill="#28a8ea" /><path d="M23 7h7v9h-7z" fill="#50c4f7" /><path d="m8 17 11 5 12-6v14H8z" fill="#3fa7ea" /><rect x="1" y="8" width="15" height="16" rx="1" fill="#0a6bc4" /><circle cx="8.500" cy="16" r="3.800" fill="none" stroke="#fff" strokeWidth="2.200" /></TaskIcon> },
  { name: "IntelliJ", state: "open", icon: <TaskIcon><path d="M3 3h26v26H3z" fill="#0b7be0" /><path d="M3 3h12L3 17z" fill="#f9822c" /><path d="M9 3h9L3 20v-7z" fill="#e6327c" /><path d="M24 29h5V18z" fill="#9a5ad6" /><path d="M7 7h19v19H7z" fill="#000" /><path d="M9 9.500h5M11.500 9.500v7M9 16.500h5M18.500 9.500v5c0 2.500-2.500 2.500-3.500 1M15.500 9.500h4M9 23h7" fill="none" stroke="#fff" strokeWidth="1.700" /></TaskIcon> },
  { name: "Chrome", state: "open", icon: (
    <svg width="40" height="40" viewBox="-4 -4 40 40" aria-hidden="true">
      <circle cx="16" cy="16" r="15" fill="#1e9e4a" />
      <path d="M29 8.500A15 15 0 0 1 16 31l3-10 2-5-5-7.500z" fill="#ffc93a" />
      <path d="M3 8.500A15 15 0 0 1 29 8.500H16L9.500 20z" fill="#e8352d" /><circle cx="16" cy="16" r="7.500" fill="#fff" /><circle cx="16" cy="16" r="5.800" fill="#2f8ae8" />
      <circle cx="26.500" cy="5.500" r="10" fill="#5a44ad" /><path d="M23.500 2v7.500M29.500 2v7.500M23.500 5.700h6" stroke="#d9d2f5" strokeWidth="1.700" />
    </svg>
  ) },
  { name: "Terminal", state: "open", icon: <TaskIcon><rect x="1" y="5" width="30" height="22" rx="1.500" fill="#3d3d3d" /><path d="M1 9V6.500Q1 5 2.500 5H12v4z" fill="#d5d5d5" /><path d="M12 5h9v4h-9z" fill="#9a9a9a" /><path d="m5 13 5 4.500L5 22" fill="none" stroke="#ddd" strokeWidth="2.500" /><path d="M14 22.500h10" stroke="#fff" strokeWidth="3" /></TaskIcon> },
  { name: "Excel", state: "active", icon: <ExcelIcon size={30} /> },
];

export default function App() {
  return (
    <Page>
      <GlobalStyle />
      <TitleBar>
        <TitleSide>
          <ExcelIcon size={20} />
          <AutoSave>AutoSave<Toggle><input type="checkbox" />Off</Toggle></AutoSave>
          <IconButton $w={20} aria-label="Save">
            <Draw w={20} h={20} s="#9b2d9b" sw={1.800}><path d="M1 1h18v18H4l-3-3z" fill="#d493d6" /><path d="M5 1h10v8H5zM6 19v-6h8v6z" fill="#fff" /></Draw>
          </IconButton>
          <FileName>EmailData.csv<Chev big /></FileName>
        </TitleSide>
        <SearchBox><MagnifierIcon /><input type="text" placeholder="Search" aria-label="Search" /></SearchBox>
        <TitleSide $end>
          Harshith M
          <Avatar>HM</Avatar>
          <IconButton $w={60} aria-label="Coming soon">
            <Draw w={20} h={20}><path d="m2 16 8-13 5 5L3.500 19z" fill="#fafafa" /><path d="m7 17 2 2 3-5" /><path d="M12.500 3.500V.500M15 4.500l3-3.500M16.500 7l3-.500" stroke={blue} /></Draw>
          </IconButton>
          <IconButton $w={60} aria-label="Minimize"><Draw w={14} h={4} s="#222"><path d="M1 2h12" /></Draw></IconButton>
          <IconButton $w={60} aria-label="Restore"><Draw w={14} h={14} s="#222"><rect x="1" y="3.500" width="9.500" height="9.500" rx="2" /><path d="M4 1h6q3 0 3 3v6" /></Draw></IconButton>
          <IconButton $w={60} aria-label="Close"><Draw w={14} h={14} s="#222"><path d="m1 1 12 12M13 1 1 13" /></Draw></IconButton>
        </TitleSide>
      </TitleBar>

      <TabBar>
        {tabs.map((t) => <Tab key={t} $active={t === "Home"}>{t}</Tab>)}
        <TabSpacer />
        <TopActions>
          <ActionButton><Draw w={14} h={14} s="#222"><path d="M1 1h12v8.500H6.500L3.500 12.500v-3H1z" /></Draw>Comments</ActionButton>
          <ActionButton $primary>
            <Draw w={14} h={15} s="#fff"><path d="M5 6H1v8h11v-3M4 11c0-4 2-6 5-6V1.500L13 6l-4 4V7.500C7 7.500 5.500 8.500 4 11z" /></Draw>Share<Chev c="#fff" />
          </ActionButton>
        </TopActions>
      </TabBar>

      <RibbonCard>
        <RibbonGroups />
        <MessageBar role="status">
          <Draw w={28} h={28} s={blue} sw={1.800}><circle cx="14" cy="14" r="13" fill="#fff" /><path d="M14 12v10M14 6v3" strokeWidth={3} /></Draw>
          <strong>POSSIBLE DATA LOSS</strong>
          <a href="#formats">Some features might be lost if you save this workbook in the comma-delimited (.csv) format. To preserve these features, save it in an Excel file format.</a>
          <MessageButton $w={157} $gap={42}>Don't show again</MessageButton>
          <MessageButton $w={102} $gap={11}>Save As...</MessageButton>
          <Push><IconButton aria-label="Dismiss"><Draw w={9} h={9} s="#666" sw={2.200}><path d="m1 1 7 7M8 1 1 8" /></Draw></IconButton></Push>
        </MessageBar>
      </RibbonCard>

      <FormulaBar>
        <FieldBox $w={127}><input aria-label="Name box" defaultValue="I14" /><Chev big /></FieldBox>
        <IconButton $w={25} aria-label="Resize name box"><Dots /></IconButton>
        <FieldBox $w={92}>
          <IconButton $w={18} aria-label="Cancel"><Draw w={16} h={16} s="#b5b5b5"><path d="m1 1 14 14M15 1 1 15" /></Draw></IconButton>
          <IconButton $w={40} aria-label="Enter"><Draw w={20} h={16} s="#b5b5b5"><path d="m1 9 5 6L19 1" /></Draw></IconButton>
          <IconButton $w={20} aria-label="Insert function">
            <Draw w={20} h={22} s="#333" sw={1.700}><path d="M12 2c-3-2-4 1-4.500 4L5.500 17c-.500 3-2 4-4.500 3M4 8h7M11 9c3-1 3 2 4 5s2 3 4 1M19 9c-3-1-5 7-8.500 6.500" /></Draw>
          </IconButton>
        </FieldBox>
        <FormulaInput>
          <textarea aria-label="Formula bar" />
          <IconButton $w={20} aria-label="Collapse formula bar"><Chev big up /></IconButton>
        </FormulaInput>
      </FormulaBar>

      <SheetArea>
        <SheetClip><Worksheet /></SheetClip>
        <VTrack>
          <Tri d="M5.500 1.500 10 9.500H1z" />
          <VThumb />
          <VGap />
          <Tri d="M5.500 9.500 10 1.500H1z" />
        </VTrack>
      </SheetArea>

      <SheetBar>
        <SheetNav>
          <IconButton $w={40} aria-label="Previous sheet"><Draw w={8} h={12} s="#999"><path d="M7 1 1.500 6 7 11" /></Draw></IconButton>
          <IconButton $w={40} aria-label="Next sheet"><Draw w={8} h={12} s="#999"><path d="m1 1 5.500 5L1 11" /></Draw></IconButton>
        </SheetNav>
        <SheetTab><span>EmailData</span></SheetTab>
        <SheetAdd>
          <Divider $w={7} $h={24} />
          <IconButton aria-label="New sheet"><Draw w={14} h={14} s="#333"><path d="M7 0v14M0 7h14" /></Draw></IconButton>
          <Push><IconButton $w={14} aria-label="Resize tabs"><Dots /></IconButton></Push>
        </SheetAdd>
        <HTrack>
          <Tri d="M9.500 1v9L1.500 5.500z" />
          <HThumb />
          <Push><Tri d="M1.500 1v9L9.500 5.500z" /></Push>
        </HTrack>
      </SheetBar>

      <StatusBar>
        Ready
        <StatusItem aria-label="Record macro">
          <Draw w={20} h={18}><path d="M9 16H1V1h16v6M1 4.500h16M3.500 8h4M3.500 11h4" /><circle cx="13.500" cy="12" r="5" fill="#fff" /><circle cx="13.500" cy="12" r="2.200" fill="#333" /></Draw>
        </StatusItem>
        <StatusItem>
          <Draw w={19} h={19}><circle cx="9" cy="3" r="2" /><path d="M1 3.500C4 7 14 7 17 3.500M6 6.500v4L4 18M12 6.500v3M6 11l3 1" strokeWidth={1.700} /><path d="M12 12c0-3 5-3 5 0 0 2-2.500 2-2.500 4M14.500 17v1.500" /></Draw>
          Accessibility: Unavailable
        </StatusItem>
        <TabSpacer />
        <ViewButton $on aria-label="Normal view"><Draw w={18} h={16}><path d="M1 1h16v14H1zM6.300 1v14M11.600 1v14M1 5.700h16M1 10.300h16" /></Draw></ViewButton>
        <ViewButton aria-label="Page layout view"><Draw w={18} h={16}><path d="M1 1h16v14H1zM5 3.500h8v9H5zM7 6h4M7 8h4M7 10h4" /></Draw></ViewButton>
        <ViewButton aria-label="Page break view"><Draw w={18} h={16}><path d="M1 1h16v14H1zM1 10h10V1M6 1v9" /></Draw></ViewButton>
        <IconButton aria-label="Zoom out"><Draw w={10} h={10} s="#333"><path d="M0 5h10" /></Draw></IconButton>
        <Zoom type="range" min="0" max="100" defaultValue="50" aria-label="Zoom" />
        <IconButton aria-label="Zoom in"><Draw w={10} h={10} s="#333"><path d="M0 5h10M5 0v10" /></Draw></IconButton>
        <Percent>100%</Percent>
      </StatusBar>

      <Taskbar>
        <Weather>
          <svg width="28" height="28" viewBox="0 0 28 28" aria-hidden="true">
            <defs><linearGradient id="sun" x1="0" y1="0" x2="1" y2="1"><stop offset="0" stopColor="#fbc02d" /><stop offset=".5" stopColor="#e0912c" /><stop offset="1" stopColor="#e5622a" /></linearGradient></defs>
            <circle cx="14" cy="14" r="13" fill="url(#sun)" />
          </svg>
          <div>30°C<small>Sunny</small></div>
        </Weather>
        <Apps>
          <AppButton aria-label="Start">
            <svg width="30" height="30" viewBox="0 0 30 30" aria-hidden="true">
              <path d="M1 1h13.500v13.500H1z" fill="#28b4f0" /><path d="M15.500 1H29v13.500H15.500z" fill="#1c98e4" /><path d="M1 15.500h13.500V29H1zM15.500 15.500H29V29H15.500z" fill="#0878d6" />
            </svg>
          </AppButton>
          <TaskSearch>
            <Draw w={18} h={19} s="#222" sw={2.200}><circle cx="8" cy="8" r="6.500" /><path d="m12.500 13 5 5" /></Draw>
            <input type="text" placeholder="Search" aria-label="Search Windows" />
            <svg width="70" height="37" viewBox="0 0 70 37" aria-hidden="true">
              <path d="M10 17.500q-3-4 1-5 3-5 8-2 5 0 6 4 0 2-2 3z" fill="#b5d4ea" /><path d="M51 20q1-3 3-2.500 3-3 5 .500 2 .500 1 2z" fill="#b5d4ea" />
              <path d="M36.500 13h6l2 15H35z" fill="#f5c163" /><path d="M40 13h2.500l2 15H40z" fill="#d9953f" /><path d="M36 13q3.500-7 7 0z" fill="#a5532c" />
              <path d="m32 6 11 12M43 6.500 32 18" stroke="#555" strokeWidth="1.600" />
              <path d="M44 27q10-2 26-1v11H44z" fill="#f2b13c" /><path d="M30 37q2-11 16-10 14 2 20 10z" fill="#e8352d" /><path d="M50 27q8-1 16 6l-3 2q-5-6-13-8z" fill="#5d8a3a" />
              <path d="M0 37q8-11 28-10 16 0 17 3-4 7-16 7z" fill="#b5389b" /><path d="M2 35q10-9 24-7-10 5-24 7z" fill="#d894e0" /><path d="M14 34q10-5 24-5" stroke="#3f7a55" strokeWidth="1.500" fill="none" />
            </svg>
          </TaskSearch>
          {apps.map((a) => <AppButton key={a.name} $state={a.state} aria-label={a.name}>{a.icon}</AppButton>)}
        </Apps>
        <Tray>
          <IconButton aria-label="Hidden icons"><Draw w={16} h={10} s="#222" sw={1.800}><path d="m1.500 8.500 6.500-6 6.500 6" /></Draw></IconButton>
          <IconButton $w={38} aria-label="OneDrive">
            <svg width="22" height="14" viewBox="0 0 22 14" aria-hidden="true"><path d="M6 14q-6-1-5.500-5Q2 5 5.500 5 9-1 14 1.500q3 1.500 3.500 5Q22 7 22 11q-1 3-3 3z" fill="#0f6cc4" /><path d="M3 14q-3-2-2.500-5 3-5 8-2l11 6.500-1 .500z" fill="#1487dc" /><path d="m5 14 8-5q3-3 6-2 4 2 3 5-1 2-3 2z" fill="#28a8ea" /></svg>
          </IconButton>
          <TrayText>ENG<br />IN</TrayText>
          <IconButton $w={22} aria-label="Network"><Draw w={20} h={16} s="#222"><path d="M1 6c5-6 13-6 18 0M4 9c4-4 8-4 12 0M7 12c2-2 4-2 6 0" /><circle cx="10" cy="14" r="1" fill="#222" /></Draw></IconButton>
          <IconButton $w={22} aria-label="Volume"><Draw w={20} h={18} s="#222"><path d="M1 6h3l5-4v14l-5-4H1zM11.500 6c1.500 2 1.500 4 0 6M14 3.500c3 3.500 3 7.500 0 11M16.500 1.500c4 4.500 4 10.500 0 15" /></Draw></IconButton>
          <IconButton $w={20} aria-label="Battery"><Draw w={20} h={18} s="#222"><path d="M7 5h9q2 0 2 2v6q0 2-2 2H4q-2 0-2-2v-3" /><path d="M7 7h9v6H4v-3z" fill="#222" stroke="none" /><path d="M19.300 8v4" strokeWidth={2} /><path d="M4.500 0 0 6h2.500L2 10l4-6H3.500z" fill="#222" stroke="none" /></Draw></IconButton>
          <TrayText $right>12:16<br />01-04-2023</TrayText>
          <Badge>42</Badge>
        </Tray>
      </Taskbar>
    </Page>
  );
}
